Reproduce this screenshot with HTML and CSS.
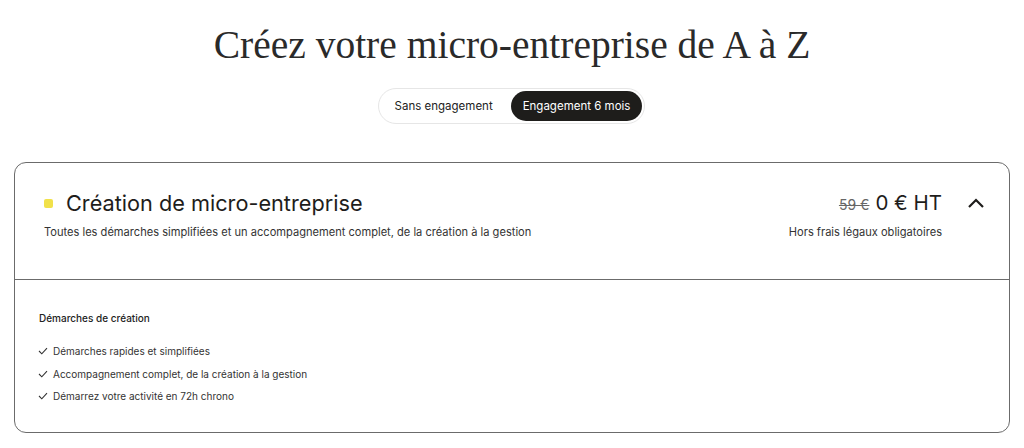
FILE: index.html
```html
<!DOCTYPE html>
<html lang="fr">
<head>
<meta charset="utf-8">
<link rel="stylesheet" href="styles.css">
</head>
<body>
<div class="page">
  <h1 class="title">Créez votre micro-entreprise de A à Z</h1>
  <div class="toggle-wrap">
    <div class="toggle">
      <span class="opt">Sans engagement</span>
      <span class="opt active">Engagement 6 mois</span>
    </div>
  </div>
  <div class="card">
    <div class="card-head">
      <div class="head-left">
        <div class="name-row">
          <span class="dot"></span>
          <span class="name">Création de micro-entreprise</span>
        </div>
        <p class="desc">Toutes les démarches simplifiées et un accompagnement complet, de la création à la gestion</p>
      </div>
      <div class="head-right">
        <div class="price-row">
          <s class="old">59 €</s>
          <span class="price">0 € HT</span>
        </div>
        <p class="legal">Hors frais légaux obligatoires</p>
      </div>
      <div class="chev">
        <svg width="18" height="12" viewBox="0 0 18 12"><path d="M2 10 L9 3 L16 10" fill="none" stroke="#1e1d1b" stroke-width="2.2"/></svg>
      </div>
    </div>
    <div class="card-body">
      <p class="sec">Démarches de création</p>
      <ul class="list">
        <li><svg class="ck" width="10" height="8" viewBox="0 0 10 8"><path d="M1 4 L3.8 6.8 L9 1.2" fill="none" stroke="#333" stroke-width="1.1"/></svg>Démarches rapides et simplifiées</li>
        <li><svg class="ck" width="10" height="8" viewBox="0 0 10 8"><path d="M1 4 L3.8 6.8 L9 1.2" fill="none" stroke="#333" stroke-width="1.1"/></svg>Accompagnement complet, de la création à la gestion</li>
        <li><svg class="ck" width="10" height="8" viewBox="0 0 10 8"><path d="M1 4 L3.8 6.8 L9 1.2" fill="none" stroke="#333" stroke-width="1.1"/></svg>Démarrez votre activité en 72h chrono</li>
      </ul>
    </div>
  </div>
</div>
</body>
</html>
```
FILE: styles.css
```css
* { box-sizing: border-box; }
html, body { margin: 0; padding: 0; background: #fff; }
body { font-family: "Inter", "Liberation Sans", sans-serif; color: #1e1d1b; }
.page { width: 1024px; height: 448px; padding: 22px 14px 0 14px; }
.title {
  margin: 0;
  font-family: "Liberation Serif", serif;
  font-weight: 400;
  font-size: 39.5px;
  line-height: 46px;
  text-align: center;
  color: #2a2a2a;
}
.toggle-wrap { display: flex; justify-content: center; margin-top: 20px; }
.toggle {
  display: flex;
  align-items: center;
  height: 36px;
  padding: 2px;
  border: 1px solid #e6e6e6;
  border-radius: 18px;
  margin-left: -1px;
}
.opt {
  font-size: 11.5px;
  padding: 0 14px;
  height: 30px;
  line-height: 30px;
  border-radius: 15px;
  color: #222;
}
.opt:first-child { padding: 0 18px 0 14px; }
.active { background: #1e1d1b; color: #fff; padding: 0 12px; }
.card {
  margin-top: 38px;
  border: 1px solid #6b6b6b;
  border-radius: 12px;
  height: 271px;
  display: flex;
  flex-direction: column;
}
.card-head {
  display: flex;
  align-items: flex-start;
  height: 117px;
  border-bottom: 1px solid #6b6b6b;
  padding: 27px 24px 0 29px;
}
.head-left { flex: 1; }
.name-row { display: flex; align-items: center; gap: 13px; height: 26px; }
.dot { width: 9px; height: 9px; background: #f1e14a; border-radius: 2px; }
.name { font-size: 21.7px; color: #1e1d1b; letter-spacing: 0; }
.desc { margin: 9px 0 0 0; font-size: 11.1px; color: #333; }
.head-right { display: flex; flex-direction: column; align-items: flex-end; }
.price-row { display: flex; align-items: baseline; gap: 6px; height: 26px; }
.old { font-size: 14px; color: #666; }
.price { font-size: 20.5px; color: #1e1d1b; }
.legal { margin: 9px 0 0 0; font-size: 11.1px; color: #333; }
.chev { width: 43px; display: flex; justify-content: flex-end; padding-top: 7px; }
.card-body { padding: 32px 24px 0 24px; }
.sec { margin: 0; font-size: 10px; font-weight: 500; color: #222; }
.list { list-style: none; margin: 16px 0 0 0; padding: 0; }
.list li { display: flex; align-items: center; gap: 5px; font-size: 10px; color: #333; height: 22.5px; }
.ck { flex: none; margin-left: -1px; }
```
